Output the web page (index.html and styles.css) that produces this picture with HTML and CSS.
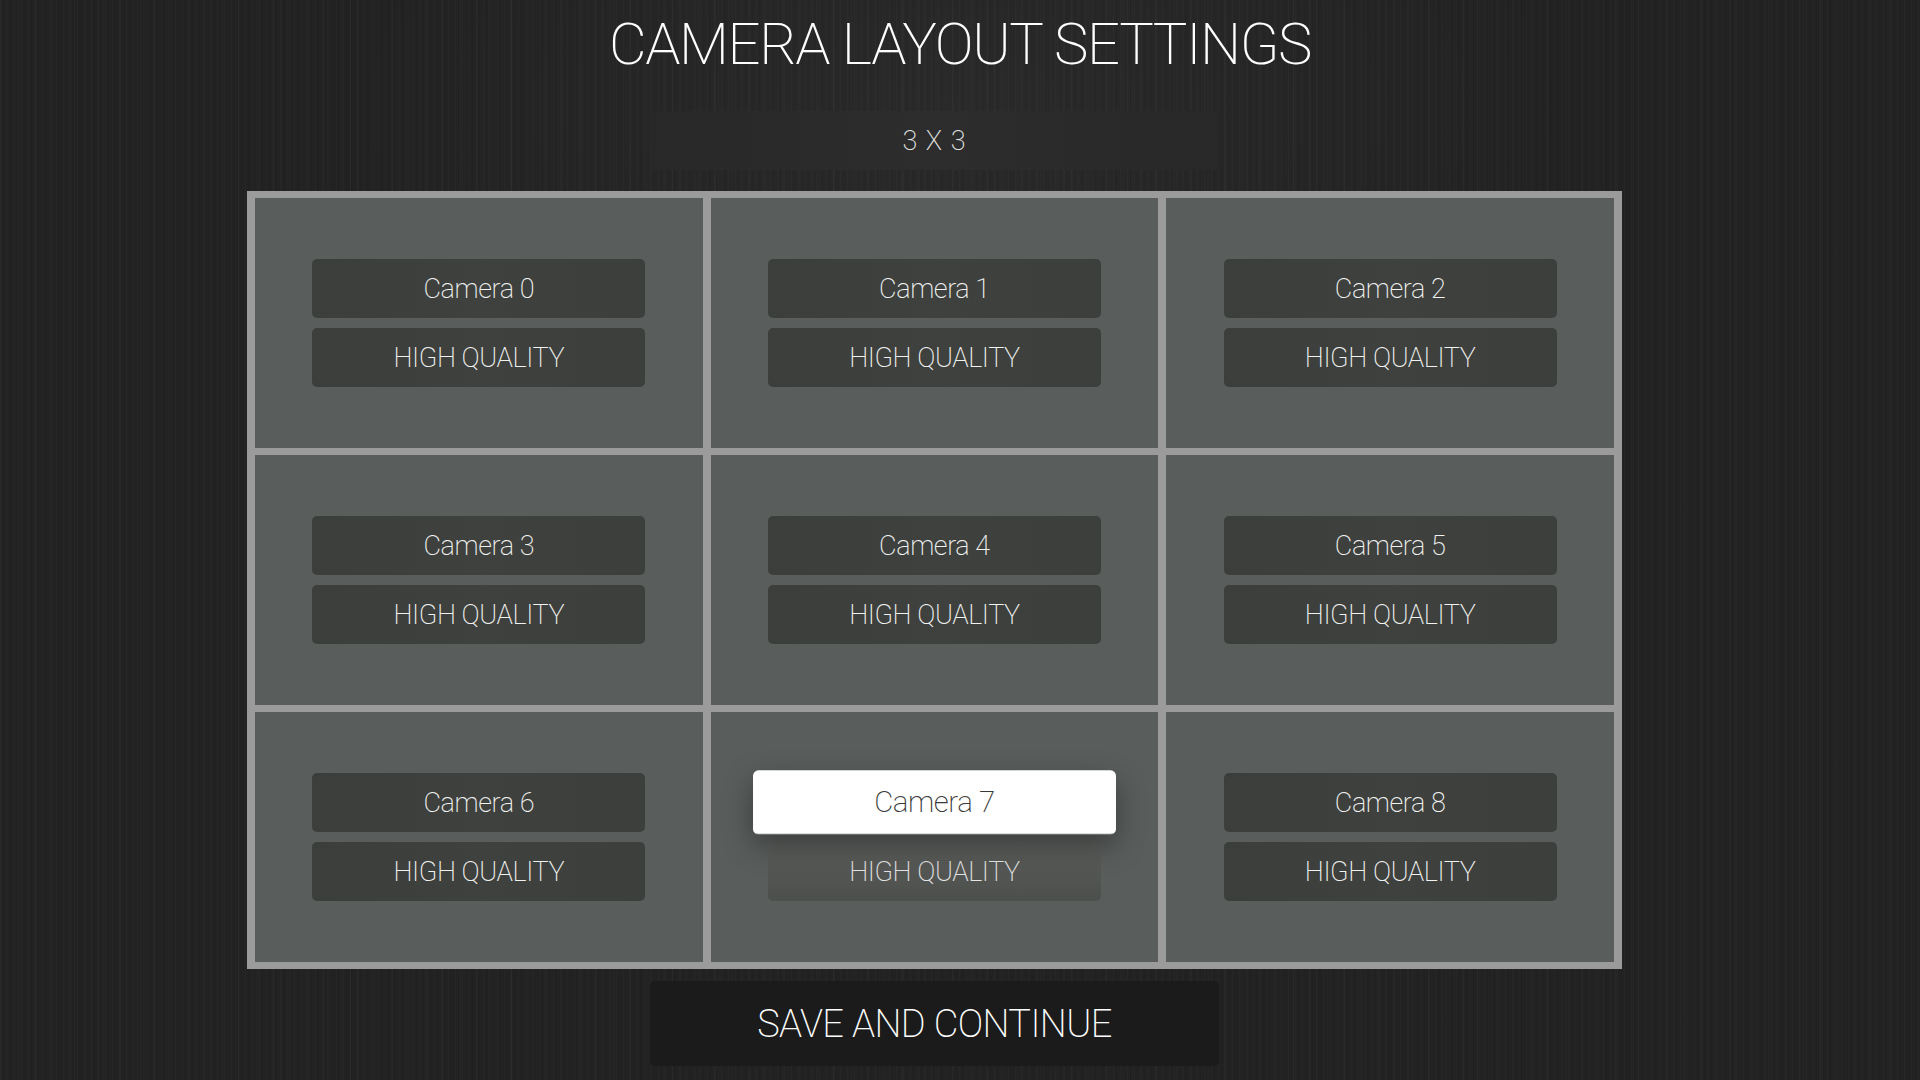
FILE: index.html
```html
<!DOCTYPE html>
<html lang="en">
<head>
<meta charset="utf-8">
<title>Camera Layout Settings</title>
<link rel="stylesheet" href="styles.css">
</head>
<body>
<div class="page">
  <h1 class="title">CAMERA LAYOUT SETTINGS</h1>
  <div class="content">
    <div class="layout-select">3 X 3</div>
    <div class="grid">
      <div class="cell"><div class="btn">Camera 0</div><div class="btn">HIGH QUALITY</div></div>
      <div class="cell"><div class="btn">Camera 1</div><div class="btn">HIGH QUALITY</div></div>
      <div class="cell"><div class="btn">Camera 2</div><div class="btn">HIGH QUALITY</div></div>
      <div class="cell"><div class="btn">Camera 3</div><div class="btn">HIGH QUALITY</div></div>
      <div class="cell"><div class="btn">Camera 4</div><div class="btn">HIGH QUALITY</div></div>
      <div class="cell"><div class="btn">Camera 5</div><div class="btn">HIGH QUALITY</div></div>
      <div class="cell"><div class="btn">Camera 6</div><div class="btn">HIGH QUALITY</div></div>
      <div class="cell"><div class="btn btn-selected">Camera 7</div><div class="btn btn-muted">HIGH QUALITY</div></div>
      <div class="cell"><div class="btn">Camera 8</div><div class="btn">HIGH QUALITY</div></div>
    </div>
    <div class="save">SAVE AND CONTINUE</div>
  </div>
</div>
</body>
</html>
```
FILE: styles.css
```css
html, body {
  margin: 0;
  padding: 0;
  height: 100%;
}

body {
  font-family: Roboto, "Liberation Sans", sans-serif;
  font-weight: 300;
  color: #f2f2f2;
  background-color: #222222;
  background-image:
    radial-gradient(ellipse 900px 500px at 50% 10%, rgba(255,255,255,0.035), transparent 70%),
    repeating-linear-gradient(90deg, rgba(255,255,255,0.018) 0 1px, transparent 1px 3px, rgba(0,0,0,0.05) 3px 4px, transparent 4px 7px),
    repeating-linear-gradient(90deg, rgba(255,255,255,0.012) 0 2px, transparent 2px 11px, rgba(0,0,0,0.04) 11px 12px, transparent 12px 17px),
    repeating-linear-gradient(90deg, transparent 0 5px, rgba(255,255,255,0.015) 5px 6px, transparent 6px 23px);
  overflow: hidden;
}

.page {
  padding-top: 7px;
  display: flex;
  flex-direction: column;
}

.title {
  margin: 0;
  text-align: center;
  font-size: 58px;
  line-height: 75px;
  font-weight: 200;
  letter-spacing: -1.4px;
  color: #ffffff;
}

.content {
  width: 1375px;
  margin-left: 247px;
  display: flex;
  flex-direction: column;
  align-items: center;
}

.layout-select {
  margin-top: 29px;
  width: 569px;
  height: 59px;
  border-radius: 3px;
  background: linear-gradient(90deg, #272827, #2c2d2c 50%, #272827);
  display: flex;
  align-items: center;
  justify-content: center;
  font-size: 27px;
  font-weight: 200;
  letter-spacing: 1px;
  color: #e6e6e6;
}

.grid {
  margin-top: 21px;
  align-self: stretch;
  display: grid;
  grid-template-columns: repeat(3, 1fr);
  grid-template-rows: repeat(3, 250px);
  gap: 7px 8px;
  padding: 7px 8px;
  background: #9b9b9b;
}

.cell {
  background: #595d5b;
  display: flex;
  flex-direction: column;
  align-items: center;
  justify-content: center;
  gap: 10px;
}

.btn {
  width: 333px;
  height: 59px;
  border-radius: 5px;
  background: linear-gradient(90deg, #3b3e3a, #3e413d 50%, #3c3f3b);
  display: flex;
  align-items: center;
  justify-content: center;
  font-size: 27px;
  font-weight: 200;
  letter-spacing: -0.4px;
  color: #f2f2f2;
}

.btn-selected {
  position: relative;
  z-index: 2;
  transform: scale(1.09);
  background: #ffffff;
  color: #3a3a3a;
  border-bottom: 1px solid #b8b8b8;
  box-sizing: border-box;
  box-shadow: 0 10px 26px rgba(0, 0, 0, 0.35);
}

.btn-muted {
  background: linear-gradient(180deg, #5c5e5c, #4d4f4d);
  color: #e4e4e4;
}

.save {
  margin-top: 12px;
  width: 569px;
  height: 85px;
  border-radius: 5px;
  background: #1b1b1b;
  display: flex;
  align-items: center;
  justify-content: center;
  font-size: 38px;
  font-weight: 200;
  letter-spacing: -0.6px;
  color: #ffffff;
}
```
